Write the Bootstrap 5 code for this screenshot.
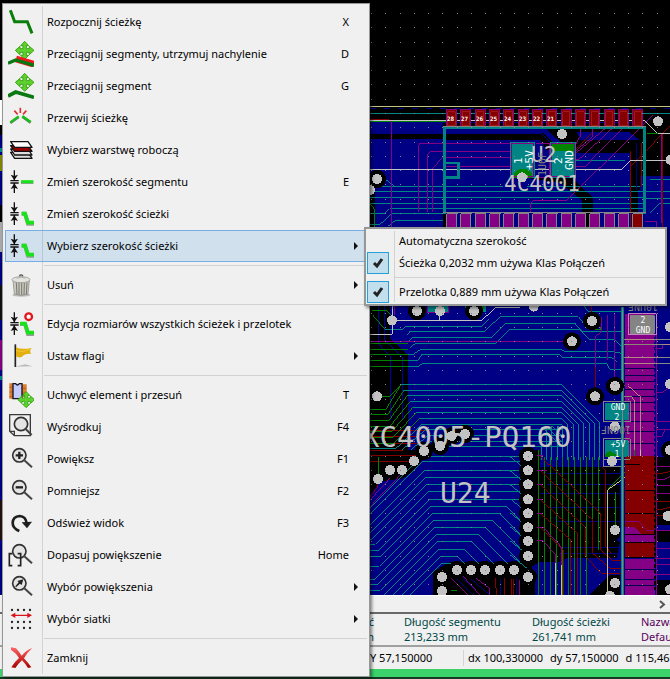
<!DOCTYPE html>
<html lang="pl">
<head>
<meta charset="utf-8">
<meta name="viewport" content="width=device-width, initial-scale=1">
<title>Pcbnew</title>
<link href="https://cdn.jsdelivr.net/npm/bootstrap@5.3.0/dist/css/bootstrap.min.css" rel="stylesheet">
<style>
body{font-family:"Noto Sans","Open Sans",sans-serif;font-size:11px;line-height:16px;color:#000;background:#000}
.board{min-height:0;background:#000}
.board svg{display:block;width:100%;height:100%}
.hscroll{height:17px;background:#f0f0f0;border-top:1px solid #fff}
.msgpanel{height:33px;background:#f0f0f0;border-top:2px solid #696969;color:#004848;line-height:15px}
.msgpanel .lead-col{width:374px;margin-right:30px}
.msgpanel .wide-col{width:128px}
.msgpanel .part-col{width:109px}
.purple{color:#5a0060}
.statusline{height:24px;background:#f0f0f0;border-top:2px solid #a0a0a0}
.statusline .pos{width:464px;padding-left:370px;border-right:1px solid #d4d4d4}
.statusline .delta{gap:7px}
.taskedge{height:10px;background:#3bd16b;border-bottom:2px solid #123c22}
.popmenu{background:#f0f0f0;border:1px solid #979797;padding:2px;box-shadow:2px 2px 3px #0007}
.mainmenu{left:2px;top:3px;width:368px}
.submenu{left:364px;top:227px;width:303px;border-width:2px;padding:1px}
.rail::before{content:"";position:absolute;top:2px;bottom:2px;left:39px;border-left:1px solid #d2d2d2}
.submenu.rail::before{left:28px}
.mi{display:flex;align-items:center;width:100%;height:32px;border:1px solid transparent;background:none;padding:0;color:#000;text-align:left;position:relative}
.mi .ico{width:26px;height:26px;margin:0 13px 0 2px;flex:none}
.mi .keys{margin-left:auto;margin-right:17px}
.mi .arrow{margin-left:auto;margin-right:8px;border:4px solid transparent;border-left-color:#111;border-right:0}
.mi.current{background:#0078d722;border-color:#78aee5}
.sep{height:1px;margin:3px 0 3px 39px;border:0;background:#d2d2d2;opacity:1}
.submenu .sep{margin-left:28px}
.si{height:22px}
.si .tick{width:22px;height:22px;margin:0 10px 0 -1px;flex:none}
.si .tick.on{background:#c1dfec;border:1px solid #26a0da}
</style>
<script src="https://cdn.jsdelivr.net/npm/bootstrap@5.3.0/dist/js/bootstrap.bundle.min.js"></script>
</head>
<body class="vh-100 overflow-hidden">
<div class="d-flex flex-column h-100 position-relative">
<main class="board flex-grow-1 overflow-hidden">
<svg aria-label="PCB" shape-rendering="crispEdges">
<rect width="100%" height="100%" fill="#000"/>
<g><rect y="100" width="2" height="25" fill="#fff"/><rect y="135" width="2" height="460" fill="#000084"/><rect y="148" width="2" height="4" fill="#008484"/><rect y="155" width="2" height="16" fill="#848400"/><rect y="205" width="2" height="18" fill="#000"/><rect y="222" width="2" height="30" fill="#aaa"/><rect y="285" width="2" height="35" fill="#111"/><rect y="340" width="2" height="30" fill="#840084"/><rect y="376" width="2" height="4" fill="#008484"/><rect y="500" width="2" height="40" fill="#211"/></g>
<g transform="translate(360 90) scale(.33333)" fill="none" stroke-width="3">
<!-- upper area -->
<path fill="#000084" d="M0 96H250V128H0ZM0 147H250V411H0ZM258 118H850V411H258ZM850 230H930V660H0V411H850Z"/>
<path fill="#000084" d="M0 411H930V1515H0Z"/>
<path fill="#000" d="M258 130H545L565 150H258ZM560 118H930V250H815V300H835V370H810V190H640L590 155ZM30 280L45 300V420H30ZM600 265L665 330V411H698V325L640 265Z"/>
<path fill="#000084" d="M258 118H560L600 155V180H258ZM650 125H805L840 150H660ZM640 188H810V411H700V320L640 262ZM850 260H930V411H850Z"/>
<path fill="#000" d="M258 130H550L600 180H560L540 150H258ZM640 155H930V184H640ZM480 260L600 280 665 330V411H698V320L625 262ZM810 184H857V245H930V258H840V300H835V370H810Z"/>
<path stroke="#c3c384" d="M30 49H930"/>
<path stroke="#000084" stroke-dasharray="18 24" d="M30 56H930"/>
<path stroke="#008484" d="M30 70H930M30 289H430M500 289H840M30 304H850M30 322H850M30 340H850M90 357H850M640 211H780L795 211M75 267L103 289M30 372H70L88 357M95 372H250M85 408L105 392H250M30 403H60L92 374M870 270H930M870 370L900 340H930M850 325H930M857 305H930"/>
<path stroke="#000084" d="M30 98H835M30 130H545L580 165M830 160V300"/>
<path stroke="#008400" d="M30 95H260M820 95L850 112M860 130H930M30 340L45 360V411"/>
<path stroke="#840000" d="M30 89H88M930 108L812 230M812 184V411M908 130V411M845 160V290M640 184L700 125"/>
<path stroke="#840084" d="M95 92V411M450 160H180L175 168V365M204 365V192L213 184H450M218 365V235L248 202H510M500 230H258L250 238V365M512 365V340L522 331H620L880 75M645 168L662 136V112M645 184L698 140V112M640 196L740 112M640 210H655L760 112M640 230H675L790 112M855 395H890V411M906 130V400"/>
<path stroke="#c3c3c3" d="M30 92H855L893 130H930M30 238H785L811 211H930"/>
<g id="pads"></g>
<path stroke="#008484" stroke-width="8" d="M254 372V112H853V372M258 219H295V263H258"/>
<path stroke="#848484" d="M250 368H857M250 109H857"/>
<path fill="#008484" stroke="#008484" d="M452 157H525V264H452ZM572 157H646V264H572Z"/>
<path fill="#008400" d="M574 158H646V184H574ZM463 264V248L478 237H500L517 252V264Z"/>
<path stroke="#840084" d="M455 160H522V261H455ZM575 160H643V261H575ZM527 160H570V262H527"/>
<!-- middle area -->
<g transform="translate(0 630)">
<path fill="#000" d="M0 15H90V115L143 165V370L90 420 30 490H0ZM30 365H145V480H30Z"/>
<path stroke="#0000a8" d="M56 15V132L92 170V360M74 15V120L128 172V360"/>
<path fill="#008484" d="M205 15H265V36H205ZM315 15H378V36H315Z"/><path fill="#008400" d="M320 15H372V28H320Z"/>
<path stroke="#840084" d="M203 15V38H267V15"/>
<path stroke="#008484" d="M38 45L75 88H128L136 79H365L385 58M143 104L150 94H375L420 50H655L675 75M143 127L158 112H395L438 70H645L665 95H785M150 143L165 131H405L450 88H660L690 120H765L785 140M143 163H160L183 148H605L612 154H755L785 160M143 181H175L185 163H598L605 172H755L770 185M143 199H175L188 190H740L750 208H785M670 15L685 35H785"/>
<path stroke="#008400" d="M38 45L75 88M30 130H143M30 148H143M30 163H143M30 181H143M30 199H143M35 31H80L96 50M51 289H90L123 254M675 70L690 90H720L725 75M765 258H810L840 290V470"/>
<path stroke="#840084" d="M30 125H636M725 50V95L706 110V289M742 45V180M765 40V250M104 15V45"/>
<path stroke="#840000" d="M696 45V15M706 200V270M30 391H205M30 409H175M30 430H170M30 452H160M30 470H145"/>
<path stroke="#c3c3c3" d="M30 103H97V15M96 61H365L408 22H480M240 33V61"/>
<g id="nested"></g>
<path fill="#840084" d="M795 42H885V470H795Z"/>
<path stroke="#000050" d="M795 134H880M795 205H885M795 226H885M795 245H885M795 268H885M795 290H885M795 308H885M795 335H885M795 365H885M795 395H885M795 430H885"/>
<path stroke="#840084" d="M889 40V470M885 146H908V134H930M889 277H908L930 260M889 365H930M889 390H930M889 410H905L915 390"/>
<path stroke="#000084" stroke-width="5" stroke-dasharray="9 7" d="M884 110V470"/>
<path stroke="#c3c384" stroke-opacity=".7" d="M790 118H930M790 134H930M790 172H930M790 190H930M805 258L843 292V470M790 290H815L825 305V470"/>
<path fill="#848484" stroke="#848484" d="M811 47H883V100H811Z"/><path stroke="#c384c3" d="M806 42H889V105H806Z"/>
<path fill="#008484" stroke="#008484" d="M736 310H805V360H736ZM736 422H805V470H736Z"/>
<path stroke="#848484" d="M730 304H811V366H730ZM730 416H811V500H730Z"/>
</g>
<!-- lower area -->
<g transform="translate(0 1080)">
<path fill="#000" d="M30 0H200L175 50 130 85 60 95 30 135ZM480 0H540V50H780V275L770 325H620L600 335H540L515 350 525 385V435H220V365L270 335H480Z"/>
<path fill="#000" d="M690 435L750 375H780V435ZM885 20H930V275H885ZM890 390H930V435H890Z"/>
<path fill="#000084" d="M770 270L785 255V280ZM885 5H910V20H885ZM885 225H930V240H885ZM480 0H478V340H480Z"/>
<path stroke="#000084" d="M540 130H785M570 172H785M585 200L590 214H785M540 50L560 70H785M560 103H780M605 292H785M285 380L340 435M305 380L360 435M325 380L390 435M421 385V435M470 385V435M600 310H785"/>
<g id="fan"></g>
<path stroke="#840000" d="M30 2H130M30 18H170M30 34H160M54 87V110L30 140M540 18L722 190V300L760 333H785M540 61L698 210V310L750 355H785M540 103L676 232V320L725 370H785M540 148L652 250V435M540 190L631 268V435M540 232L610 300V435M725 50L736 60V290L755 310M405 378L410 435M433 378V435M455 378V435M462 350V435"/>
<path stroke="#840084" d="M504 18H548M504 61H560M504 103H550M504 148H550M504 190H550M504 232H550L605 292V435M504 273H550L587 315V435M270 381L325 435M306 375L360 435M335 375L388 415V435M90 85L30 150M126 70L30 170M480 340V435"/>
<path stroke="#c3c384" d="M587 340V435M605 345V435M841 0V50L743 120V435"/>
<path stroke="#008400" d="M55 20V87M767 125V230M823 0V40L743 118M246 381H285M246 423H290"/>
<path fill="#840000" d="M795 18H885V320H795Z"/>
<path fill="#840084" d="M795 232H825L847 255H885V275H795ZM795 327H885V435H795Z"/>
<path stroke="#000" d="M795 123H885M795 190H885M795 255H885M795 278H885M795 322H885M795 45H840"/>
<path stroke="#840084" d="M889 0V435M889 50H930M889 90H910L930 80M889 108H930M889 130H930M795 214H835L860 242H930M885 295H930M885 327H930M885 375H930M795 345H930"/>
<path stroke="#840000" d="M885 70H905L930 65M885 155H930M885 178H905L930 172M885 198H923"/>
<path stroke="#000" stroke-width="6" stroke-dasharray="10 7" d="M884 20V420"/>
<path stroke="#000050" d="M795 360H885M795 388H885M795 408H885"/>
<path fill="#008484" d="M736 0H800V20H736Z"/><path fill="#008400" d="M736 22V12L750 2 785 22Z"/><path stroke="#848484" d="M730 0V28H811V0"/>
</g>
<path stroke="#008484" stroke-width="8" d="M788 650V1515"/><path stroke="#848484" d="M787 650V1515"/>
<g id="vias"></g>
</g>
<g id="dots" fill="#848484"></g>
<g fill="#c3c3c3" font-family="DejaVu Sans Mono,monospace" shape-rendering="auto">
<text x="504" y="191" font-size="21">4C4001</text>
<text x="531" y="162" font-size="21">U2</text>
<text x="362" y="447" font-size="29">XC4005-PQ160</text>
<text x="440" y="503" font-size="28">U24</text>
<g fill="#848484" font-size="10"><text transform="translate(546 176) rotate(-90)">1U0F</text><text transform="translate(658 303) rotate(180)">10UNF</text><text transform="translate(631 426) rotate(180)">100NF</text></g>
<g fill="#fff" font-size="11"><text transform="translate(522 164) rotate(-90)">1</text><text transform="translate(533 170) rotate(-90)">+5V</text><text transform="translate(562 164) rotate(-90)">2</text><text transform="translate(573 170) rotate(-90)">GND</text>
<g text-anchor="middle" font-size="8"><text x="643" y="323">2</text><text x="643" y="333">GND</text><text x="618" y="410">GND</text><text x="617" y="420">2</text><text x="618" y="447">+5V</text><text x="617" y="457">1</text></g></g>
<g id="pins" fill="#fff" font-size="6" font-weight="700"></g>
</g>
</svg>
</main>
<div class="hscroll d-flex align-items-center justify-content-end pe-1"><svg width="7" height="9" viewBox="0 0 7 9"><path d="M1 1L5 4.500L1 8" fill="none" stroke="#555" stroke-width="2"/></svg></div>
<section class="msgpanel d-flex overflow-hidden text-nowrap">
<div class="lead-col text-end flex-shrink-0">ć<br>m</div>
<div class="wide-col flex-shrink-0">Długość segmentu<br>213,233 mm</div>
<div class="part-col flex-shrink-0">Długość ścieżki<br>261,741 mm</div>
<div class="purple flex-shrink-0">Nazwa klasy<br>Default</div>
</section>
<footer>
<div class="statusline d-flex align-items-center overflow-hidden text-nowrap"><div class="pos flex-shrink-0">Y 57,150000</div><div class="delta ps-1 d-flex"><span>dx 100,330000</span><span>dy 57,150000</span><span>d 115,465200</span></div></div>
<div class="taskedge"></div>
</footer>

<nav class="popmenu mainmenu rail position-absolute" aria-label="Menu kontekstowe">
<button class="mi"><svg class="ico" viewBox="24 27 78 78"><path d="M31 31L44 65H82L96 100" fill="none" stroke="#0a7d0a" stroke-width="9"/></svg>Rozpocznij ścieżkę<span class="keys">X</span></button>
<button class="mi"><svg class="ico" viewBox="24 123 78 78"><use href="#cross"/><path d="M48 177L102 193" stroke="#f0181c" stroke-width="20"/><path d="M24 190L47 180 102 196" fill="none" stroke="#087812" stroke-width="10"/></svg>Przeciągnij segmenty, utrzymuj nachylenie<span class="keys">D</span></button>
<button class="mi"><svg class="ico" viewBox="24 219 78 78"><g transform="translate(0 96)"><path id="cross" d="M74 124L86 137H79V146H88V139L102 151 88 164V157H79V166H86L74 178 62 166H69V157H60V164L46 151 60 139V146H69V137H62Z" fill="#5ed12e" stroke="#39a614" stroke-width="3"/></g><path d="M24 288L47 276 102 292" fill="none" stroke="#087812" stroke-width="11"/></svg>Przeciągnij segment<span class="keys">G</span></button>
<button class="mi"><svg class="ico" viewBox="24 315 78 78"><path d="M31 369L56 351M67 350L92 368" stroke="#777" stroke-width="8"/><path d="M31 367L56 349M67 349L92 366" stroke="#12c212" stroke-width="7"/><path d="M61 323V339M43 332L53 343M79 332L69 343" stroke="#d33" stroke-width="5"/></svg>Przerwij ścieżkę</button>
<button class="mi"><svg class="ico" viewBox="24 411 78 78"><g stroke="#111" stroke-width="4" stroke-linejoin="round"><path fill="#ddd" d="M32 457H84L96 475H44Z"/><path fill="#ddd" d="M32 447H84L96 465H44Z"/><path fill="#900" d="M32 437H84L96 454H44Z"/><path fill="#fff" d="M32 425H84L96 442H44Z"/></g></svg>Wybierz warstwę roboczą</button>
<button class="mi"><svg class="ico" viewBox="24 12 78 78"><g id="gauge"><path d="M31 47H56M31 54H56M43 16V46M43 55V84" stroke="#111" stroke-width="4"/><path d="M32 29L43 33 54 29 43 46ZM32 72L43 68 54 72 43 55Z" fill="#111"/></g><path d="M63 53H100" stroke="#999" stroke-width="8"/><path d="M63 50H100" stroke="#1ae21a" stroke-width="9"/></svg>Zmień szerokość segmentu<span class="keys">E</span></button>
<button class="mi"><svg class="ico" viewBox="24 108 78 78"><use href="#gauge" y="96"/><g id="bend"><path d="M65 146H75L84 176H102" fill="none" stroke="#999" stroke-width="12"/><path d="M65 146H75L84 173H102" fill="none" stroke="#1ae21a" stroke-width="11"/></g></svg>Zmień szerokość ścieżki</button>
<button class="mi current"><svg class="ico" viewBox="24 204 78 78"><use href="#gauge" y="192"/><use href="#bend" y="96"/></svg>Wybierz szerokość ścieżki<span class="arrow"></span></button>
<hr class="sep">
<button class="mi"><svg class="ico" viewBox="24 321 78 78"><ellipse cx="64" cy="390" rx="27" ry="5" fill="#bbb"/><path d="M39 347L43 387Q63 396 84 387L88 347Z" fill="#c9c9c0" stroke="#83837c" stroke-width="2"/><path d="M49 353L51 388M57 354V390M65 354V390M73 354L72 390M81 353L79 388" stroke="#77776f" stroke-width="3"/><ellipse cx="63" cy="344" rx="27" ry="9" fill="#e4e4de" stroke="#8a8a84" stroke-width="2"/><path d="M50 340Q63 333 76 340" fill="none" stroke="#999" stroke-width="2"/><path d="M58 333Q63 326 69 333" fill="none" stroke="#555" stroke-width="4"/></svg>Usuń<span class="arrow"></span></button>
<hr class="sep">
<button class="mi"><svg class="ico" viewBox="24 438 78 78"><use href="#gauge" y="426"/><path d="M60 477H75L84 507H102" fill="none" stroke="#999" stroke-width="12"/><path d="M60 476H75L84 503H102" fill="none" stroke="#1ae21a" stroke-width="11"/><circle cx="86" cy="455" r="10" fill="#fff" stroke="#e3161d" stroke-width="7"/></svg>Edycja rozmiarów wszystkich ścieżek i przelotek</button>
<button class="mi"><svg class="ico" viewBox="24 24 78 78"><path d="M46 95L98 94 75 88Z" fill="#bbb"/><path d="M46 28V96" stroke="#222" stroke-width="5"/><path d="M48 37Q62 45 96 39Q86 47 94 56Q72 55 65 66Q55 69 48 64Z" fill="#e3b010"/><path d="M49 47Q68 54 88 43" fill="none" stroke="#f6d14e" stroke-width="2"/></svg>Ustaw flagi<span class="arrow"></span></button>
<hr class="sep">
<button class="mi"><svg class="ico" viewBox="24 141 78 78"><path d="M28 145H40V191H28ZM66 148H80V186H66Z" fill="#dc7f2c"/><path d="M28 157H40M28 171H40M28 185H40M66 160H80M66 174H80" stroke="#a85a1c" stroke-width="2"/><path d="M39 146H47Q52 154 58 146H66V191H39Z" fill="#c6cbff" stroke="#151525" stroke-width="4"/><g transform="translate(12 58) scale(.9)"><use href="#cross"/></g></svg>Uchwyć element i przesuń<span class="keys">T</span></button>
<button class="mi"><svg class="ico" viewBox="24 237 78 78"><path d="M29 239H91V302H43L29 289ZM30 289H43V302" fill="none" stroke="#3a3a3a" stroke-width="4"/><circle cx="63" cy="267" r="20" fill="#e4e4e4" stroke="#333" stroke-width="5"/><path d="M77 282L95 300" stroke="#444" stroke-width="6"/></svg>Wyśrodkuj<span class="keys">F4</span></button>
<button class="mi"><svg class="ico" viewBox="24 333 78 78"><g id="lens"><circle cx="58" cy="361" r="20" fill="#e4e4e4" stroke="#333" stroke-width="5"/><path d="M73 376L96 397" stroke="#444" stroke-width="6"/></g><path d="M47 361H69M58 350V372" stroke="#222" stroke-width="7"/></svg>Powiększ<span class="keys">F1</span></button>
<button class="mi"><svg class="ico" viewBox="24 429 78 78"><use href="#lens" y="96"/><path d="M47 457H69" stroke="#222" stroke-width="7"/></svg>Pomniejsz<span class="keys">F2</span></button>
<button class="mi"><svg class="ico" viewBox="24 15 78 78"><path d="M58 78Q38 70 38 54Q39 34 59 33Q77 34 80 54" fill="none" stroke="#1e1e1e" stroke-width="8"/><path d="M65 52L96 50 81 70Z" fill="#1e1e1e"/></svg>Odśwież widok<span class="keys">F3</span></button>
<button class="mi"><svg class="ico" viewBox="24 111 78 78"><use href="#lens" y="-222"/><path d="M37 146H28V182H37M53 146H62V182H53" fill="none" stroke="#222" stroke-width="5"/></svg>Dopasuj powiększenie<span class="keys">Home</span></button>
<button class="mi"><svg class="ico" viewBox="24 207 78 78"><use href="#lens" y="-126"/><path d="M70 223L65 240 60 236 48 247 46 244 56 232 52 228Z" fill="#222"/></svg>Wybór powiększenia<span class="arrow"></span></button>
<button class="mi"><svg class="ico" viewBox="24 303 78 78"><path d="M36 315H100M36 351H100M36 369H100" stroke="#222" stroke-width="7" stroke-linecap="round" stroke-dasharray="0 18"/><path d="M32 331L46 323V329H82V323L96 331 82 339V333H46V339Z" fill="#d8151a"/></svg>Wybór siatki<span class="arrow"></span></button>
<hr class="sep">
<button class="mi"><svg class="ico" viewBox="24 420 78 78"><defs><linearGradient id="rx" x2="0" y2="1"><stop stop-color="#f66"/><stop offset="1" stop-color="#a80000"/></linearGradient></defs><path d="M33 427L48 430Q57 440 65 452Q78 436 97 429Q83 441 72 460Q84 473 94 487L84 489Q76 476 66 466Q56 475 46 489L34 487Q44 470 57 459Q48 444 33 434Z" fill="url(#rx)"/></svg>Zamknij</button>
</nav>

<nav class="popmenu submenu rail position-absolute" aria-label="Szerokość ścieżki">
<button class="mi si"><span class="tick"></span>Automatyczna szerokość</button>
<button class="mi si"><span class="tick on d-flex"><svg viewBox="0 0 20 20"><path d="M6 10L9 13 14 6" fill="none" stroke="#222" stroke-width="3"/></svg></span>Ścieżka 0,2032 mm używa Klas Połączeń</button>
<hr class="sep">
<button class="mi si"><span class="tick on d-flex"><svg viewBox="0 0 20 20"><path d="M6 10L9 13 14 6" fill="none" stroke="#222" stroke-width="3"/></svg></span>Przelotka 0,889 mm używa Klas Połączeń</button>
</nav>
</div>
<script>
const put=(id,html)=>document.getElementById(id).innerHTML=html;
// solder pads above and below the chip
let s='';
for(let i=0;i<14;i++){const x=258+43*i;
 s+=`<path fill="#840000" stroke="#840084" d="M${x+2} 58H${x+32}V113H${x+2}Z"/><path stroke="#a01818" d="M${x+6} 66H${x+28}V108H${x+6}Z"/><path fill="${i==13?'#840000':'#840084'}" stroke="#848484" d="M${x+2} 371H${x+32}V420H${x+2}Z"/>`}
put('pads',s);
put('pins',['28','27','26','25','24','23','22','21'].map((t,i)=>`<text x="${(447+i*14.3).toFixed(0)}" y="121">${t}</text>`).join(''));
// parallel traces bending around the chip label
s='';
for(let i=0;i<12;i++){const y=254+17*i,x=123+9*i;
 s+=`<path stroke="#008484" d="M${x} ${y}H605L${720-16*i} ${y+115-16*i}V480"/><path stroke="${i<7?'#008400':'#008484'}" d="M${x} ${y}L${78+i*4} ${y+74}H30"/>`}
put('nested',s);
s='';
const ys=[19,34,61,82,103,124,148,169,190,211,232,253,274,298,319,340],ends=[199,214,232,250,268,283,301,319,349,388,403,421,440,460,480,500];
ys.forEach((y,i)=>{const x=185+i*4,r=i<7?480:440-(i-7)*21,e=Math.max(r,280),k=Math.min(480-r,345-y);
 s+=`<path stroke="#008484" d="M30 ${ends[i]}H${x-(ends[i]-y)}L${x} ${y}H${e}`+(i<7||k<0?'':`L${e+k} ${y+k}`)+'"/>'});
for(let i=0;i<11;i++)s+=`<path stroke="#008400" d="M${535+18*i} ${i<1?0:20}V${i>8?300:435}"/>`;
for(let i=0;i<8;i++)s+=`<path stroke="#008484" d="M450 ${20+42*i}L500 ${60+42*i}"/>`;
put('fan',s);
// vias: x, y, with clearance ring or not
const v=[[606,132,0],[486,262,0],[51,267,1],[30,300,0],[894,94,0],[932,210,0]];
[[171,33,1],[240,33,0],[342,33,1],[96,61,0],[51,289,0],[315,402,1],[275,408,1],[240,438,1],[192,453,1],[521,20,0],[696,63,1],[636,124,1],[705,289,1],[765,258,1],[765,380,0],[504,468,1],[930,81,0],[930,252,0],[930,450,1]].forEach(a=>v.push([a[0],a[1]+630,a[2]]));
[[90,60,0],[126,60,0],[54,87,0],[162,33,0],[291,360,1],[333,360,1],[375,360,1],[420,360,1],[462,360,1],[246,381,1],[246,423,1],[504,61,1],[504,103,1],[504,148,1],[504,190,1],[504,232,1],[504,273,1],[504,318,1],[504,381,1],[756,33,0],[765,240,0],[765,399,0],[923,198,0],[930,418,0],[930,0,0],[750,438,0]].forEach(a=>v.push([a[0],a[1]+1080,a[2]]));
put('vias',v.filter(a=>a[2]).map(a=>`<circle cx="${a[0]}" cy="${a[1]}" r="27" fill="#000"/>`).join('')+v.map(a=>`<circle cx="${a[0]}" cy="${a[1]}" r="15" fill="#c3c3c3"/>`).join(''));
// snap grid
s='';
for(let j=0;j<41;j++)for(let i=0;i<22;i++)s+=`<rect x="${Math.round(371+14.28*i)}" y="${Math.round(13+14.28*j)}" width="1" height="1"/>`;
put('dots',s);
</script>
</body>
</html>
